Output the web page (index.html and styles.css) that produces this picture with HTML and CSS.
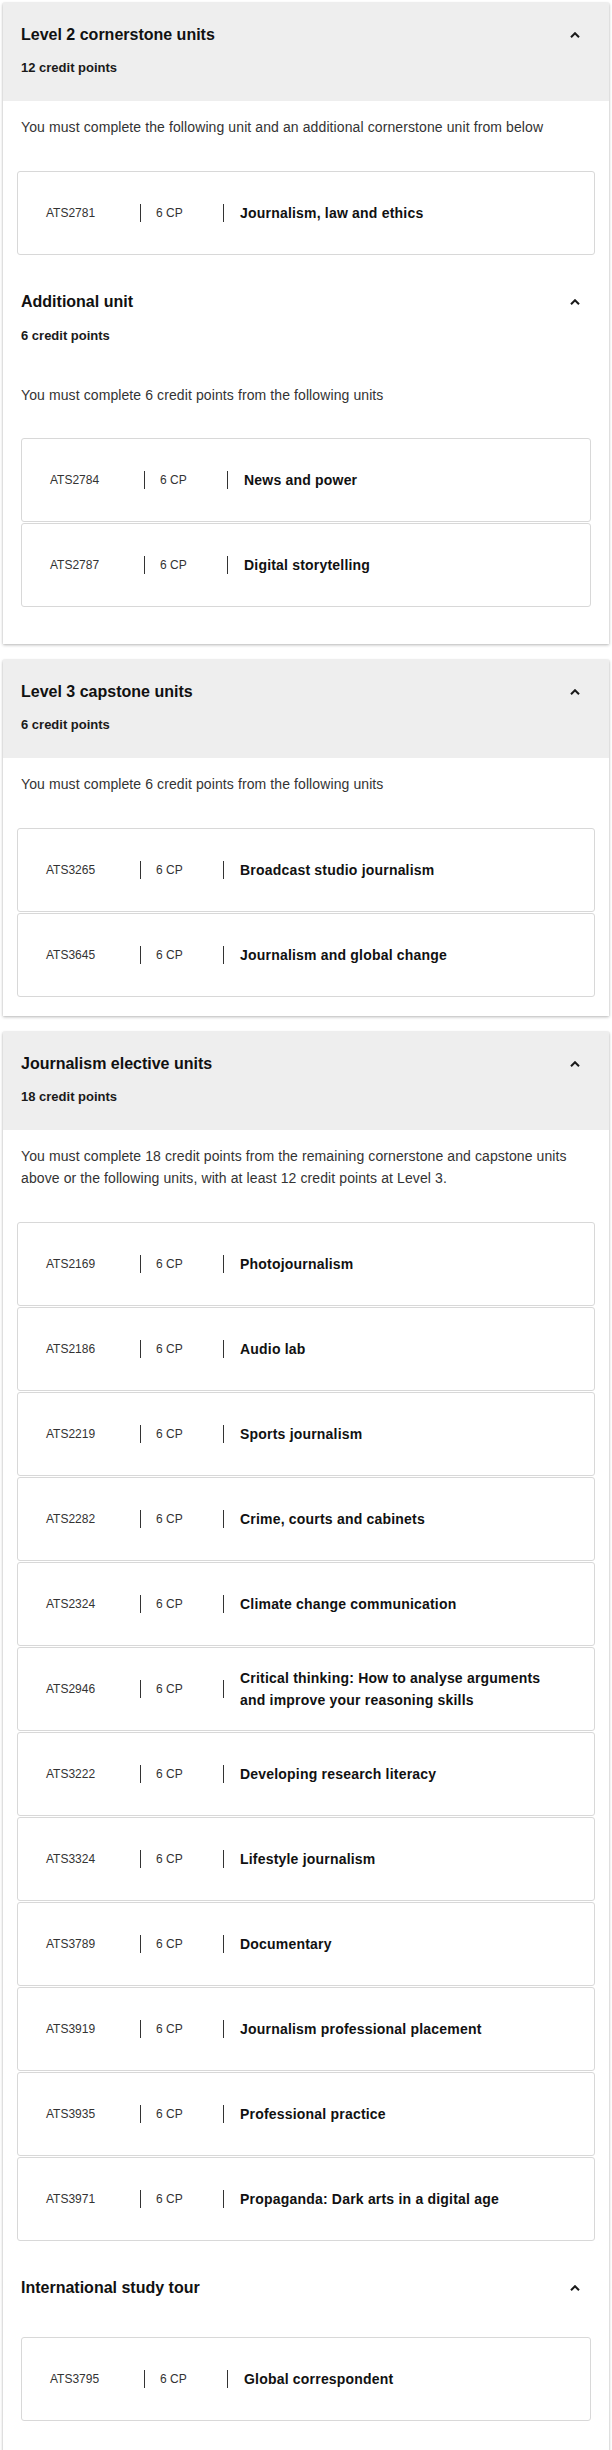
FILE: index.html
```html
<!DOCTYPE html>
<html lang="en">
<head>
    <meta charset="UTF-8">
    <meta name="viewport" content="width=device-width, initial-scale=1.0">
    <title>Journalism units</title>
    <link rel="stylesheet" href="styles.css">
</head>
<body>
    <div class="card">
        <div class="card-head">
            <div class="head-row">
                <h2>Level 2 cornerstone units</h2>
                <svg class="chevron" width="10" height="6" viewBox="0 0 10 6"><path d="M1 5.2 L5 1.2 L9 5.2"/></svg>
            </div>
            <p class="credits">12 credit points</p>
        </div>
        <div class="card-body">
            <p class="desc">You must complete the following unit and an additional cornerstone unit from below</p>
            <div class="unit-list">
                <div class="unit"><span class="code">ATS2781</span><span class="sep"></span><span class="cp">6 CP</span><span class="sep"></span><span class="name">Journalism, law and ethics</span></div>
            </div>
            <div class="sub">
                <div class="head-row sub-head">
                    <h2>Additional unit</h2>
                    <svg class="chevron" width="10" height="6" viewBox="0 0 10 6"><path d="M1 5.2 L5 1.2 L9 5.2"/></svg>
                </div>
                <p class="credits sub-credits">6 credit points</p>
                <p class="desc sub-desc">You must complete 6 credit points from the following units</p>
                <div class="unit-list">
                    <div class="unit"><span class="code">ATS2784</span><span class="sep"></span><span class="cp">6 CP</span><span class="sep"></span><span class="name">News and power</span></div>
                    <div class="unit"><span class="code">ATS2787</span><span class="sep"></span><span class="cp">6 CP</span><span class="sep"></span><span class="name">Digital storytelling</span></div>
                </div>
            </div>
        </div>
    </div>

    <div class="card">
        <div class="card-head">
            <div class="head-row">
                <h2>Level 3 capstone units</h2>
                <svg class="chevron" width="10" height="6" viewBox="0 0 10 6"><path d="M1 5.2 L5 1.2 L9 5.2"/></svg>
            </div>
            <p class="credits">6 credit points</p>
        </div>
        <div class="card-body">
            <p class="desc">You must complete 6 credit points from the following units</p>
            <div class="unit-list">
                <div class="unit"><span class="code">ATS3265</span><span class="sep"></span><span class="cp">6 CP</span><span class="sep"></span><span class="name">Broadcast studio journalism</span></div>
                <div class="unit"><span class="code">ATS3645</span><span class="sep"></span><span class="cp">6 CP</span><span class="sep"></span><span class="name">Journalism and global change</span></div>
            </div>
        </div>
    </div>

    <div class="card">
        <div class="card-head">
            <div class="head-row">
                <h2>Journalism elective units</h2>
                <svg class="chevron" width="10" height="6" viewBox="0 0 10 6"><path d="M1 5.2 L5 1.2 L9 5.2"/></svg>
            </div>
            <p class="credits">18 credit points</p>
        </div>
        <div class="card-body">
            <p class="desc">You must complete 18 credit points from the remaining cornerstone and capstone units above or the following units, with at least 12 credit points at Level 3.</p>
            <div class="unit-list">
                <div class="unit"><span class="code">ATS2169</span><span class="sep"></span><span class="cp">6 CP</span><span class="sep"></span><span class="name">Photojournalism</span></div>
                <div class="unit"><span class="code">ATS2186</span><span class="sep"></span><span class="cp">6 CP</span><span class="sep"></span><span class="name">Audio lab</span></div>
                <div class="unit"><span class="code">ATS2219</span><span class="sep"></span><span class="cp">6 CP</span><span class="sep"></span><span class="name">Sports journalism</span></div>
                <div class="unit"><span class="code">ATS2282</span><span class="sep"></span><span class="cp">6 CP</span><span class="sep"></span><span class="name">Crime, courts and cabinets</span></div>
                <div class="unit"><span class="code">ATS2324</span><span class="sep"></span><span class="cp">6 CP</span><span class="sep"></span><span class="name">Climate change communication</span></div>
                <div class="unit"><span class="code">ATS2946</span><span class="sep"></span><span class="cp">6 CP</span><span class="sep"></span><span class="name">Critical thinking: How to analyse arguments and improve your reasoning skills</span></div>
                <div class="unit"><span class="code">ATS3222</span><span class="sep"></span><span class="cp">6 CP</span><span class="sep"></span><span class="name">Developing research literacy</span></div>
                <div class="unit"><span class="code">ATS3324</span><span class="sep"></span><span class="cp">6 CP</span><span class="sep"></span><span class="name">Lifestyle journalism</span></div>
                <div class="unit"><span class="code">ATS3789</span><span class="sep"></span><span class="cp">6 CP</span><span class="sep"></span><span class="name">Documentary</span></div>
                <div class="unit"><span class="code">ATS3919</span><span class="sep"></span><span class="cp">6 CP</span><span class="sep"></span><span class="name">Journalism professional placement</span></div>
                <div class="unit"><span class="code">ATS3935</span><span class="sep"></span><span class="cp">6 CP</span><span class="sep"></span><span class="name">Professional practice</span></div>
                <div class="unit"><span class="code">ATS3971</span><span class="sep"></span><span class="cp">6 CP</span><span class="sep"></span><span class="name">Propaganda: Dark arts in a digital age</span></div>
            </div>
            <div class="sub">
                <div class="head-row sub-head">
                    <h2>International study tour</h2>
                    <svg class="chevron" width="10" height="6" viewBox="0 0 10 6"><path d="M1 5.2 L5 1.2 L9 5.2"/></svg>
                </div>
                <div class="unit-list tour-list">
                    <div class="unit"><span class="code">ATS3795</span><span class="sep"></span><span class="cp">6 CP</span><span class="sep"></span><span class="name">Global correspondent</span></div>
                </div>
            </div>
        </div>
    </div>
</body>
</html>
```

FILE: styles.css
```css
body {
    margin: 0;
    padding: 3px 3px 0 3px;
    font-family: 'Liberation Sans', Arial, sans-serif;
    color: #1a1a1a;
    background-color: #ffffff;
}
.card {
    background-color: #ffffff;
    margin-bottom: 16px;
    padding-bottom: 19px;
    box-shadow: 0 1px 3px rgba(0, 0, 0, 0.28), 0 0 1px rgba(0, 0, 0, 0.12);
}
.card-head {
    background-color: #eeeeee;
    padding: 22px 29px 23px 18px;
}
.head-row {
    display: flex;
    justify-content: space-between;
    align-items: center;
    height: 20px;
}
h2 {
    margin: 0;
    font-size: 16px;
    line-height: 20px;
    font-weight: bold;
    color: #111111;
}
.chevron {
    display: block;
}
.chevron path {
    fill: none;
    stroke: #1a1a1a;
    stroke-width: 2;
}
.credits {
    margin: 13px 0 0 0;
    font-size: 13px;
    line-height: 20px;
    font-weight: bold;
    color: #1a1a1a;
}
.card-body {
    padding: 0 14px;
}
.desc {
    margin: 15px 4px 33px 4px;
    font-size: 14px;
    line-height: 22px;
    letter-spacing: 0.1px;
    color: #333333;
}
.unit {
    display: flex;
    align-items: center;
    height: 84px;
    box-sizing: border-box;
    padding: 0 32px 0 28px;
    border: 1px solid #d8d8d8;
    border-radius: 3px;
    background-color: #ffffff;
}
.unit + .unit {
    margin-top: 1px;
}
.code {
    flex: 0 0 94px;
    font-size: 12px;
    color: #333333;
}
.sep {
    flex: 0 0 1px;
    height: 18px;
    background-color: #333333;
}
.cp {
    flex: 0 0 82px;
    box-sizing: border-box;
    padding-left: 15px;
    font-size: 12px;
    color: #333333;
}
.name {
    flex: 1;
    padding-left: 16px;
    font-size: 14px;
    line-height: 22px;
    font-weight: bold;
    letter-spacing: 0.2px;
    color: #111111;
}
.sub {
    padding: 0 4px 18px 4px;
}
.sub-head {
    margin-top: 37px;
    padding-right: 11px;
}
.sub-credits {
    margin-top: 14px;
}
.sub-desc {
    margin: 38px 0 32px 0;
}
.tour-list {
    margin-top: 39px;
}
```
